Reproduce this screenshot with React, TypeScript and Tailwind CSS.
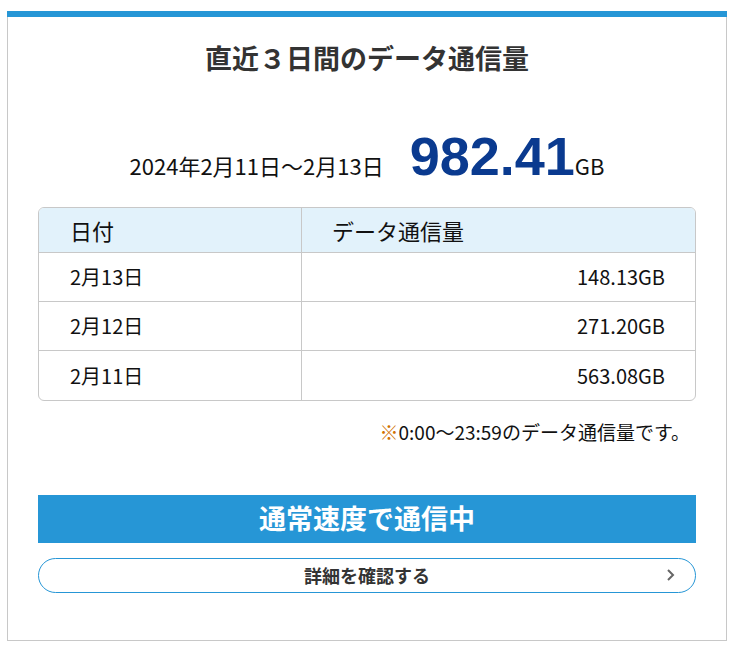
import React from "react";

const rows = [
  ["2月13日", "148.13GB"],
  ["2月12日", "271.20GB"],
  ["2月11日", "563.08GB"],
];

export default function App() {
  return (
    <div className="w-[739px] h-[655px] bg-white pt-[11px] pl-[7px]" style={{ fontFamily: '"Noto Sans CJK JP", "Noto Sans", sans-serif' }}>
      <div className="w-[720px] h-[630px] border border-[#c8c8c8] border-t-0 flex flex-col">
        <div className="h-[6px] bg-[#2696d6] -mx-px" />
        <div className="px-[30px] flex flex-col">
          <h1 className="text-center text-[27px] font-bold text-[#333] mt-[22px] leading-[38px]">直近３日間のデータ通信量</h1>
          <div className="flex items-baseline justify-center mt-[52px] h-[64px] text-[#111]">
            <span className="text-[22px]">2024年2月11日～2月13日</span>
            <span className="text-[54px] font-bold text-[#0a3a8f] ml-[26px] leading-none" style={{ fontFamily: '"Liberation Sans", sans-serif' }}>982.41</span>
            <span className="text-[22px]">GB</span>
          </div>
          <div className="mt-[14px] border border-[#c8c8c8] rounded-[6px] overflow-hidden text-[#111]">
            <div className="flex h-[45px] bg-[#e2f2fb] text-[22px] items-center border-b border-[#c8c8c8]">
              <div className="w-[263px] h-full flex items-center pl-[31px] border-r border-[#c8c8c8]">日付</div>
              <div className="flex-1 pl-[30px]">データ通信量</div>
            </div>
            {rows.map(([d, v], i) => (
              <div key={d} className={`flex h-[49px] text-[20px] items-center ${i < 2 ? "border-b border-[#c8c8c8]" : ""}`}>
                <div className="w-[263px] h-full flex items-center pl-[31px] border-r border-[#c8c8c8]">{d}</div>
                <div className="flex-1 text-right pr-[30px]">{v}</div>
              </div>
            ))}
          </div>
          <div className="text-right text-[19px] mt-[17px] pr-[6px] text-[#111]">
            <span className="text-[#d07000]">※</span>0:00～23:59のデータ通信量です。
          </div>
          <div className="mt-[48px] h-[48px] bg-[#2696d6] text-white text-[27px] font-bold flex items-center justify-center">通常速度で通信中</div>
          <div className="mt-[15px] h-[35px] rounded-full border border-[#2696d6] relative flex items-center justify-center text-[18px] font-bold text-[#333]">
            詳細を確認する
            <svg className="absolute right-[20px]" width="10" height="14" viewBox="0 0 10 14"><path d="M3 2l5 5-5 5" fill="none" stroke="#666" strokeWidth="2" /></svg>
          </div>
        </div>
      </div>
    </div>
  );
}
